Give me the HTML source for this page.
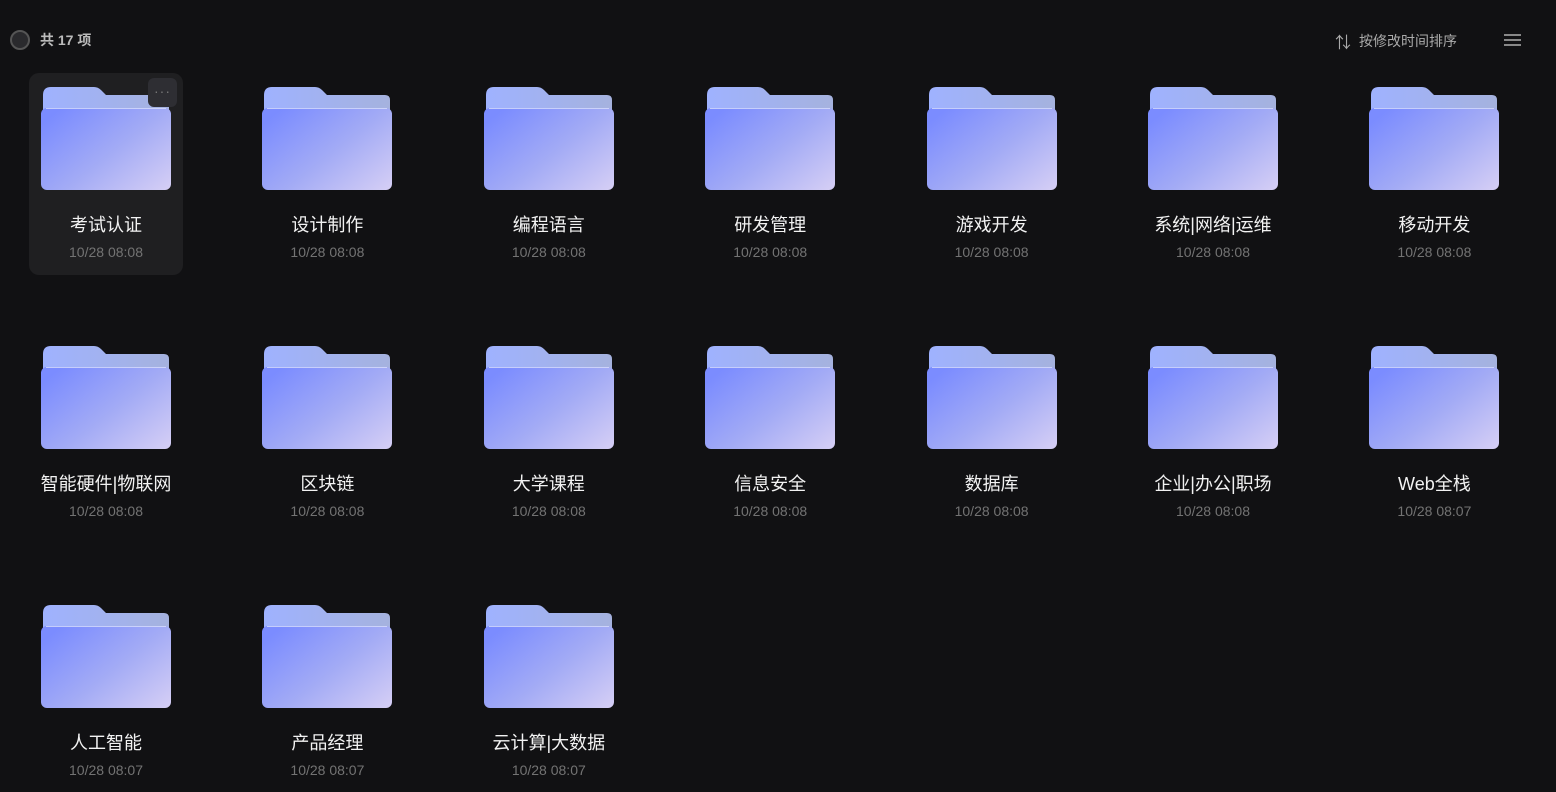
<!DOCTYPE html>
<html><head><meta charset="utf-8"><style>
body{margin:0;width:1556px;height:792px;background:#111113;font-family:"Liberation Sans","Noto Sans CJK SC",sans-serif;overflow:hidden;position:relative}
.top{position:absolute;top:30px;left:10px;display:flex;align-items:center;color:#bbb;font-size:14px;font-weight:bold}
.circ{width:20px;height:20px;border-radius:50%;border:2px solid #555;background:#2a2a2d;margin-right:10px;box-sizing:border-box}
.sort{position:absolute;top:29px;left:1335px;color:#aaa;font-size:14px;display:flex;align-items:center}
.menu{position:absolute;left:1504px;top:34px;width:17px}
.menu i{display:block;height:2px;background:#888;margin-bottom:3px}
.item{position:absolute;width:154px;text-align:center}
.item svg{display:block;margin:0 auto}
.name{color:#f2f2f2;font-size:18px;margin-top:21px;line-height:24px;white-space:nowrap}
.date{color:#737373;font-size:14px;margin-top:7px;line-height:16px}
.hover{position:absolute;left:29px;top:73px;width:154px;height:202px;background:#1f1f21;border-radius:10px}
.more{position:absolute;left:148px;top:78px;width:29px;height:29px;background:#2e2e33;border-radius:6px;color:#777;font-size:14px;line-height:26px;text-align:center;letter-spacing:1px;z-index:2}
</style></head><body>
<svg width="0" height="0" style="position:absolute"><defs>
<linearGradient id="gb" x1="0" y1="0" x2="1" y2="0"><stop offset="0" stop-color="#9fb2ff"/><stop offset="1" stop-color="#a5b2de"/></linearGradient>
<linearGradient id="gf" x1="0" y1="0.2" x2="1" y2="1"><stop offset="0" stop-color="#7b8cff"/><stop offset="0.5" stop-color="#a3abf5"/><stop offset="1" stop-color="#d6cff5"/></linearGradient>
</defs></svg>
<div class="top"><div class="circ"></div>共 17 项</div>
<div class="sort"><span style="font-size:16px;margin-right:8px">⇅</span>按修改时间排序</div>
<div class="menu"><i></i><i></i><i></i></div>
<div class="hover"></div><div class="more">···</div>
<div id="g"></div>
<script>
var names=["考试认证","设计制作","编程语言","研发管理","游戏开发","系统|网络|运维","移动开发","智能硬件|物联网","区块链","大学课程","信息安全","数据库","企业|办公|职场","Web全栈","人工智能","产品经理","云计算|大数据"];
var dates=["08","08","08","08","08","08","08","08","08","08","08","08","08","07","07","07","07"];
var svg='<svg width="132" height="105" viewBox="0 0 132 105"><path d="M3,8 Q3,0 11,0 H54 Q58,0 61,3 L66,8 H124 Q129,8 129,13 V40 H3 Z" fill="url(#gb)"/><rect x="1" y="21" width="130" height="82" rx="6" fill="url(#gf)"/><path d="M6,21.5 H126" stroke="#d8defc" stroke-width="1" opacity=".8"/></svg>';
var h="";
for(var i=0;i<17;i++){var c=i%7,r=Math.floor(i/7);var cx=106+c*221.4;
h+='<div class="item" style="left:'+(cx-77)+'px;top:'+(87+r*259)+'px">'+svg+'<div class="name">'+names[i]+'</div><div class="date">10/28 08:'+dates[i]+'</div></div>';}
document.getElementById("g").innerHTML=h;
</script>
</body></html>
